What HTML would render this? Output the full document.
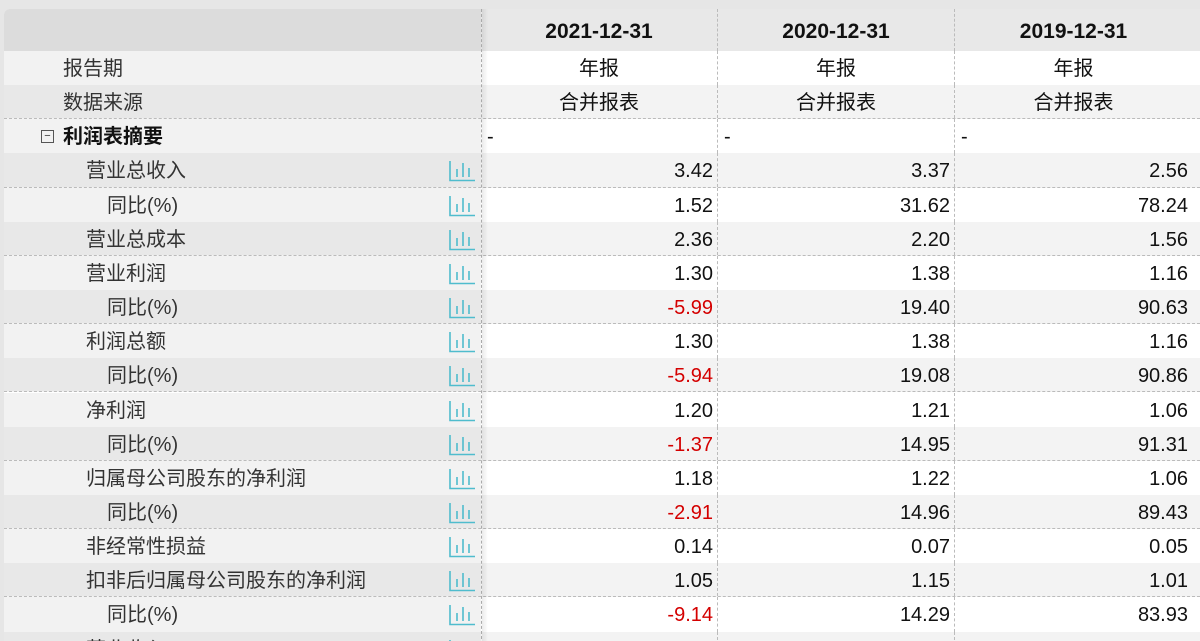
<!DOCTYPE html>
<html><head><meta charset="utf-8"><style>
html,body{margin:0;width:1200px;height:641px;overflow:hidden;background:#e6e6e6;font-family:"Liberation Sans","Noto Sans CJK SC",sans-serif;}
.wrap{position:absolute;left:4px;top:9px;width:1196px;height:632px;background:#fff;overflow:hidden;border-top-left-radius:6px;}
.row{position:absolute;left:0;width:1196px;height:34.15px;box-sizing:border-box;}
.c{position:absolute;top:0;height:100%;box-sizing:border-box;font-size:20px;line-height:37px;color:#111;}
.l{left:0;width:477px;color:#333;}
.v{text-align:right;padding-right:4px;border-right:1px dashed #bbb;}
.v1{left:477px;width:237px;}.v2{left:714px;width:237px;}.v3{left:951px;width:237px;border-right:none;}
.red{color:#d40000;}
.ic{position:absolute;left:444px;top:7px;}
.shadow{position:absolute;left:477px;top:0;width:6px;height:640px;background:linear-gradient(to right,rgba(0,0,0,.08),rgba(0,0,0,0));border-left:1px dashed #aaa;}
.h{text-align:center;font-weight:bold;font-size:21px;line-height:46px;padding:0;}
</style></head><body><div class="wrap">
<div class="row" style="top:0;height:42px;background:#e8e8e8">
<div class="c l" style="background:#dcdcdc;height:42px"></div>
<div class="c v v1 h">2021-12-31</div>
<div class="c v v2 h">2020-12-31</div>
<div class="c v v3 h">2019-12-31</div>
</div>
<div id="rows"></div>
<div class="shadow"></div>
</div>
<script>
var icon='<svg class="ic" width="28" height="22" viewBox="0 0 28 22"><g stroke="#4fbccd" stroke-width="1.6" fill="none"><path d="M2 1V20.5H27"/><path d="M9 9V17M15 3V17M21 8V17"/></g></svg>';
var R=[["报告期",59,"年报","年报","年报",0,0,1],["数据来源",59,"合并报表","合并报表","合并报表",0,0,1],
["利润表摘要",59,"-","-","-",0,1,0],
["营业总收入",82,"3.42","3.37","2.56",1],["同比(%)",103,"1.52","31.62","78.24",1],
["营业总成本",82,"2.36","2.20","1.56",1],["营业利润",82,"1.30","1.38","1.16",1],
["同比(%)",103,"-5.99","19.40","90.63",1],["利润总额",82,"1.30","1.38","1.16",1],
["同比(%)",103,"-5.94","19.08","90.86",1],["净利润",82,"1.20","1.21","1.06",1],
["同比(%)",103,"-1.37","14.95","91.31",1],["归属母公司股东的净利润",82,"1.18","1.22","1.06",1],
["同比(%)",103,"-2.91","14.96","89.43",1],["非经常性损益",82,"0.14","0.07","0.05",1],
["扣非后归属母公司股东的净利润",82,"1.05","1.15","1.01",1],["同比(%)",103,"-9.14","14.29","83.93",1],
["营业收入",82,"","","",1]];
var h='';
R.forEach(function(r,i){
var top=42+i*34.15, dark=i%2==1;
var lb=dark?'#e8e8e8':'#f2f2f2', rb=dark?'#f3f3f3':'#fff';
var bd=dark?'border-bottom:1px dashed #bbb;':'';
h+='<div class="row" style="top:'+top+'px;background:'+rb+';'+bd+'">';
var lab=r[0];
if(r[6]) lab='<span style="display:inline-block;width:13px;height:13px;border:1px solid #555;box-sizing:border-box;position:absolute;left:37px;top:11px;font-size:11px;line-height:10px;text-align:center">−</span><b style="color:#111">'+lab+'</b>';
h+='<div class="c l" style="background:'+lb+';padding-left:'+r[1]+'px">'+lab+(r[5]?icon:'')+'</div>';
for(var k=0;k<3;k++){var t=r[2+k];var cls='c v v'+(k+1)+(t.charAt(0)=='-'&&t.length>1?' red':'');
var st=r[7]?'text-align:center;padding:0':(r[6]?'text-align:left;padding-left:6px':'');
h+='<div class="'+cls+'" style="'+st+'">'+t+'</div>';}
h+='</div>';});
document.getElementById('rows').innerHTML=h;
</script>
</body></html>
